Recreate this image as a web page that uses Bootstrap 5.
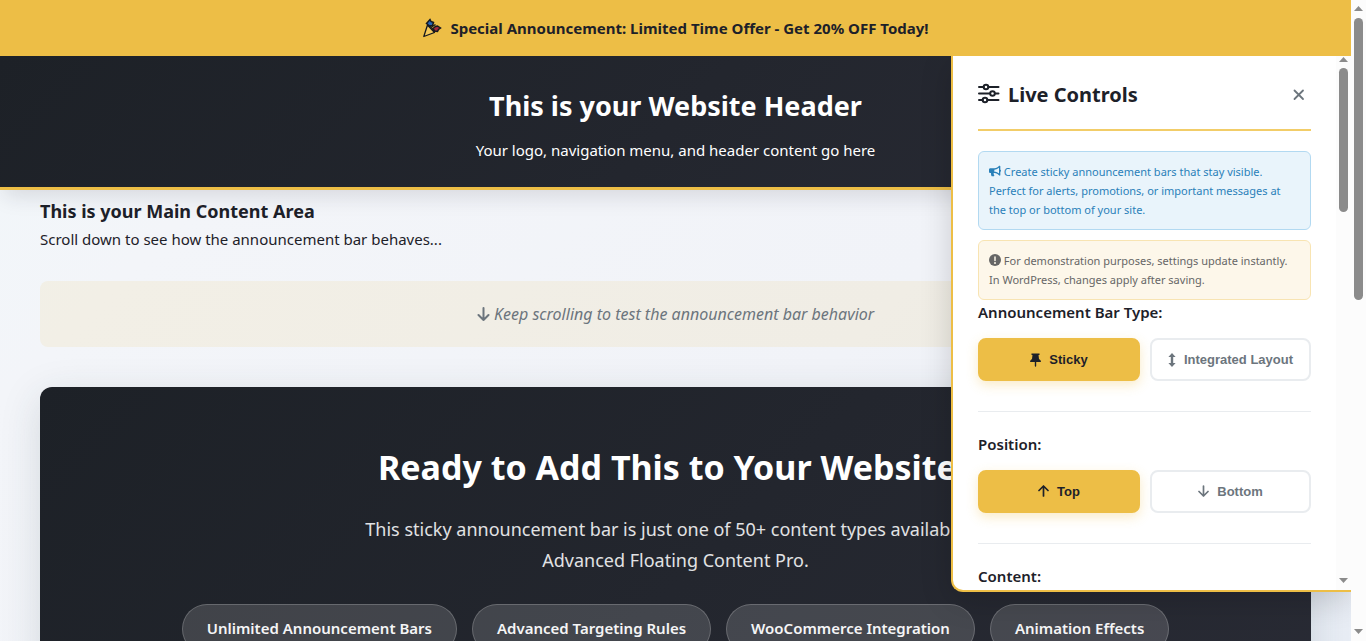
<!DOCTYPE html>
<html lang="en">
<head>
<meta charset="utf-8">
<meta name="viewport" content="width=device-width, initial-scale=1">
<title>Sticky Announcement Bar</title>
<link href="https://cdn.jsdelivr.net/npm/bootstrap@5.3.0/dist/css/bootstrap.min.css" rel="stylesheet">
<style>
:root { --gold: #edbe46; --ink: #1d2129; --muted: #6c757d; }
body { font-family: "Noto Sans", "Open Sans", sans-serif; font-size: 15px; line-height: 24px; color: var(--ink); background: #fff; }
.page-view { background: linear-gradient(135deg, #f1f7fa 0%, #f3f5f9 20%, #f1f3f8 60%, #e8edf5 100%); }
.dark-fill { background: linear-gradient(135deg, #1d2127 0%, #292b35 100%); }
.announce { background: var(--gold); height: 56px; z-index: 5; }
.site-head { border-bottom: 3px solid var(--gold); padding: 34px 20px 25px; box-shadow: 0 10px 20px -4px rgba(30, 33, 48, .13); }
.site-head h1 { font-size: 27px; line-height: 32px; margin-bottom: 16px; }
.site-main { padding: 9px 40px 0; }
.site-main h2 { font-size: 18px; line-height: 24px; margin-bottom: 4px; }
.scroll-note { background: rgba(237, 190, 70, .1); border-radius: 8px; padding: 21px 20px; margin: 30px 0 40px; font-size: 16px; color: var(--muted); }
.promo { border-radius: 12px; padding: 56px 40px; min-height: 400px; box-shadow: 0 10px 40px rgba(40, 60, 70, .15); }
.promo h3 { font-size: 34px; line-height: 48px; margin-bottom: 23px; }
.promo p { font-size: 18px; line-height: 31px; max-width: 680px; color: #e1e2e4; margin-bottom: 28px; }
.pills { gap: 15px; }
.pill { border: 1px solid rgba(255, 255, 255, .2); background: rgba(255, 255, 255, .15); border-radius: 25px; padding: 11px 24px 13px; font-weight: 600; color: #f5f5f6; }
.controls { top: 56px; right: 0; bottom: 49px; width: 400px; background: #fff; border: solid var(--gold); border-width: 0 0 2px 2px; border-radius: 0 0 0 12px; box-shadow: 0 8px 32px rgba(0, 0, 0, .16); z-index: 4; overflow: hidden; }
.controls-body { padding: 20px 25px 0; overflow: hidden; }
.controls-head { border-bottom: 2px solid #f2cd68; padding-bottom: 15px; margin-bottom: 20px; height: 55px; }
.controls-head h2 { font-size: 20px; }
.close-x { border: 0; background: none; width: 24px; height: 24px; color: var(--muted); }
.note { font-size: 11px; line-height: 19px; border: 1px solid; border-radius: 6px; padding: 10px; }
.note svg, .scroll-note svg { vertical-align: -1px; }
.note-info { color: #2980b9; background: #e9f4fb; border-color: #b2d9f1; margin-bottom: 10px; }
.note-warn { color: #666; background: #fdf7ea; border-color: #f8e4b2; }
.setting { border: 0; border-bottom: 1px solid #e9ecef; padding: 1px 0 30px; margin-bottom: 20px; }
.setting legend { font-size: 15px; line-height: 24px; font-weight: 600; margin-bottom: 13px; float: none; }
.choices { display: grid; grid-template-columns: 162px 1fr; gap: 10px; }
.choice { font-family: "Liberation Sans", Arial, sans-serif; font-size: 13px; line-height: 20px; font-weight: 700; height: 43px; border: 2px solid #e9ecef; border-radius: 8px; background: #fff; color: var(--muted); padding: 0; gap: 8px; }
.choice.active { background: var(--gold); border-color: var(--gold); color: var(--ink); box-shadow: 0 4px 12px rgba(237, 190, 70, .3); }
.rail { width: 15px; background: #fcfcfc; padding: 1px 3px; }
.rail-thumb { width: 9px; border-radius: 5px; background: #8b8b8b; }
svg { flex: none; }
</style>
</head>
<body>
<div class="d-flex vh-100 overflow-hidden">
  <div class="page-view position-relative flex-grow-1 overflow-hidden">
    <div class="announce position-relative d-flex align-items-center justify-content-center fw-bold gap-2">
      <svg width="20" height="20" viewBox="0 0 20 20" aria-hidden="true">
        <path d="M5.500 7 1.800 18.500 12.500 14.500Z" fill="#f4c95a" stroke="#17191f" stroke-width="1.300" stroke-linejoin="round"/>
        <path d="M5.500 7q5 2 7 7.500" fill="none" stroke="#17191f" stroke-width="1.300"/>
        <path d="M4.500 5.500 8 1.500l1 2 2.500 1-1 3-3 .500Z" fill="#2865b5" stroke="#17191f" stroke-width="1.500"/>
        <path d="m11 10.500 2.500-2 2-.500 3 2-2 1.500-1 2-3-.500Z" fill="#a52a3c" stroke="#17191f" stroke-width="1.500"/>
        <path d="m9.500 9 4-2.500" stroke="#17191f" stroke-width="1.300"/>
      </svg>
      <span>Special Announcement: Limited Time Offer - Get 20% OFF Today!</span>
    </div>
    <header class="site-head dark-fill text-white text-center position-relative">
      <h1 class="fw-bold">This is your Website Header</h1>
      <p class="mb-0">Your logo, navigation menu, and header content go here</p>
    </header>
    <main class="site-main">
      <h2 class="fw-bold">This is your Main Content Area</h2>
      <p class="mb-0">Scroll down to see how the announcement bar behaves...</p>
      <div class="scroll-note text-center fst-italic">
        <svg width="13" height="14" viewBox="0 0 13 14" fill="none" stroke="currentColor" stroke-width="2" stroke-linecap="round" stroke-linejoin="round" aria-hidden="true"><path d="M6.500 1v12M1.500 8l5 5 5-5"/></svg>
        Keep scrolling to test the announcement bar behavior
      </div>
      <section class="promo dark-fill text-white text-center">
        <h3 class="fw-bold">Ready to Add This to Your Website?</h3>
        <p class="mx-auto">This sticky announcement bar is just one of 50+ content types available in Advanced Floating Content Pro.</p>
        <div class="pills d-flex flex-wrap justify-content-center">
          <span class="pill">Unlimited Announcement Bars</span>
          <span class="pill">Advanced Targeting Rules</span>
          <span class="pill">WooCommerce Integration</span>
          <span class="pill">Animation Effects</span>
        </div>
      </section>
    </main>
    <aside class="controls position-absolute d-flex" aria-label="Live Controls">
      <div class="controls-body flex-grow-1">
        <div class="controls-head d-flex align-items-center">
          <svg class="mb-1" width="22" height="21" viewBox="0 0 22 21" fill="none" stroke="currentColor" stroke-width="2" stroke-linecap="round" aria-hidden="true">
            <path d="M1 4h4.500M10.500 4H20.500M1 10.500h11M17 10.500h3.500M1 17h3.500M9.500 17H20.500"/>
            <circle cx="8" cy="4" r="2.300"/><circle cx="14.500" cy="10.500" r="2.300"/><circle cx="7" cy="17" r="2.300"/>
          </svg>
          <h2 class="fw-bold mb-0 ms-2 me-auto">Live Controls</h2>
          <button type="button" class="close-x d-flex align-items-center justify-content-center p-0" aria-label="Close">
            <svg width="12" height="12" viewBox="0 0 12 12" stroke="currentColor" stroke-width="1.800" stroke-linecap="round" aria-hidden="true"><path d="m1.500 1.500 8.500 8.500M10 1.500l-8.500 8.500"/></svg>
          </button>
        </div>
        <div class="note note-info">
          <svg width="12" height="12" viewBox="0 0 576 512" fill="currentColor" aria-hidden="true"><path d="M576 240c0-23.630-12.950-44.040-32-55.120V32c0-8.750-7.080-32-32-32-7.120 0-14.190 2.380-19.980 7.020L406.970 75.040C364.290 109.190 310.650 128 256 128H64c-35.350 0-64 28.650-64 64v96c0 35.350 28.650 64 64 64h33.700c-1.390 10.480-2.180 21.140-2.180 32 0 39.770 9.260 77.350 25.560 110.940 5.190 10.690 16.520 17.060 28.400 17.060h74.280c26.050 0 41.690-29.840 25.900-50.560-16.400-21.520-26.150-48.360-26.150-77.440 0-11.110 1.620-21.790 4.410-32H256c54.660 0 108.280 18.810 150.980 52.950l85.030 68.030C497.700 477.530 504.790 480 512 480c24.910 0 32-22.780 32-32V295.130C563.050 284.040 576 263.630 576 240zm-96 141.420-33.050-26.440C392.950 311.780 325.120 288 256 288v-96c69.120 0 136.950-23.780 190.950-66.980L480 98.580z"/></svg>
          Create sticky announcement bars that stay visible. Perfect for alerts, promotions, or important messages at the top or bottom of your site.
        </div>
        <div class="note note-warn">
          <svg width="12" height="12" viewBox="0 0 12 12" aria-hidden="true"><circle cx="6" cy="6" r="6" fill="currentColor"/><path d="M6 3v3.500" stroke="#fdf7ea" stroke-width="1.500" stroke-linecap="round"/><circle cx="6" cy="9" r="1" fill="#fdf7ea"/></svg>
          For demonstration purposes, settings update instantly. In WordPress, changes apply after saving.
        </div>
        <fieldset class="setting">
          <legend>Announcement Bar Type:</legend>
          <div class="choices">
            <button type="button" class="choice active d-flex align-items-center justify-content-center">
              <svg width="11" height="14" viewBox="0 0 11 14" fill="currentColor" aria-hidden="true"><path d="M1.500.500h8V2h-1l.500 4q2 1.200 2 3H6.200V13l-.700 1-.700-1V9H0q0-1.800 2-3l.500-4h-1Z"/></svg>
              Sticky
            </button>
            <button type="button" class="choice d-flex align-items-center justify-content-center">
              <svg width="8" height="14" viewBox="0 0 8 14" fill="currentColor" aria-hidden="true"><path d="m4 0 3.600 4H5.200v6h2.400L4 14 .400 10h2.400V4H.400Z"/></svg>
              Integrated Layout
            </button>
          </div>
        </fieldset>
        <fieldset class="setting">
          <legend>Position:</legend>
          <div class="choices">
            <button type="button" class="choice active d-flex align-items-center justify-content-center">
              <svg width="11" height="14" viewBox="0 0 11 14" fill="none" stroke="currentColor" stroke-width="1.700" stroke-linecap="round" stroke-linejoin="round" aria-hidden="true"><path d="M5.500 11V1M1 5.500 5.500 1 10 5.500"/></svg>
              Top
            </button>
            <button type="button" class="choice d-flex align-items-center justify-content-center">
              <svg width="11" height="14" viewBox="0 0 11 14" fill="none" stroke="currentColor" stroke-width="1.700" stroke-linecap="round" stroke-linejoin="round" aria-hidden="true"><path d="M5.500 1v10M1 6.500 5.500 11 10 6.500"/></svg>
              Bottom
            </button>
          </div>
        </fieldset>
        <fieldset class="setting">
          <legend>Content:</legend>
        </fieldset>
      </div>
      <div class="rail d-flex flex-column flex-shrink-0" aria-hidden="true">
        <svg width="9" height="11" viewBox="0 0 9 11" fill="#8b8b8b"><path d="m4.500 0 4.500 5H0Z"/></svg>
        <div class="rail-thumb" style="height:27%"></div>
        <svg class="mt-auto" width="9" height="12" viewBox="0 0 9 12" fill="#8b8b8b"><path d="M0 1h9L4.500 6Z"/></svg>
      </div>
    </aside>
  </div>
  <div class="rail d-flex flex-column flex-shrink-0" aria-hidden="true">
    <svg width="9" height="17" viewBox="0 0 9 17" fill="#8b8b8b"><path d="m4.500 5 4.500 5H0Z"/></svg>
    <div class="rail-thumb" style="height:44.200%"></div>
    <svg class="mt-auto" width="9" height="12" viewBox="0 0 9 12" fill="#8b8b8b"><path d="M0 1h9L4.500 6Z"/></svg>
  </div>
</div>
<script src="https://cdn.jsdelivr.net/npm/bootstrap@5.3.0/dist/js/bootstrap.bundle.min.js"></script>
</body>
</html>
